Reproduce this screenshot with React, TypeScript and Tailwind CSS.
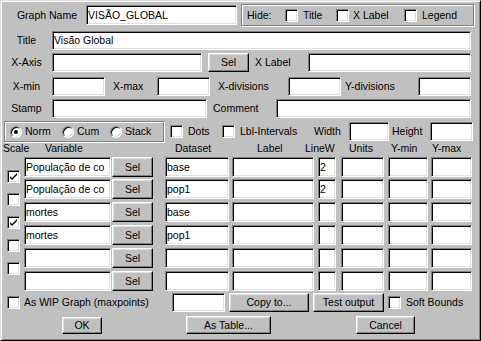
import React from 'react';

const sunken =
  'bg-white border border-t-[#808080] border-l-[#808080] border-b-white border-r-white shadow-[inset_1px_1px_0_#000,inset_-1px_-1px_0_#dfdfdf]';
const raised =
  'bg-[#c0c0c0] border border-t-white border-l-white border-b-black border-r-black shadow-[inset_-1px_-1px_0_#808080,inset_1px_1px_0_#dfdfdf]';
const etched = 'border border-[#808080] shadow-[inset_1px_1px_0_#fff,1px_1px_0_#fff]';

const Field = ({ className = '', value = '' }: { className?: string; value?: string }) => (
  <div className={`${sunken} ${className} shrink-0 flex items-center pl-[1px] overflow-hidden whitespace-nowrap`}>
    {value}
  </div>
);

const Btn = ({ className = '', label }: { className?: string; label: string }) => (
  <div className={`${raised} ${className} shrink-0 flex items-center justify-center`}>{label}</div>
);

const Check = ({ checked = false, className = '' }: { checked?: boolean; className?: string }) => (
  <div className={`${sunken} ${className} w-[13px] h-[13px] shrink-0 flex items-center justify-center`}>
    {checked && (
      <svg width="9" height="9" viewBox="0 0 9 9">
        <path d="M1 4v2l2 2 5-5V1L3 6z" fill="#000" />
      </svg>
    )}
  </div>
);

const Radio = ({ on = false }: { on?: boolean }) => (
  <div className="w-[12px] h-[12px] shrink-0 rounded-full bg-white border border-t-[#808080] border-l-[#808080] border-b-white border-r-white shadow-[inset_1px_1px_0_#000,inset_-1px_-1px_0_#dfdfdf] flex items-center justify-center">
    {on && <div className="w-[4px] h-[4px] rounded-full bg-black" />}
  </div>
);

const ROWS = [
  { v: 'População de co', d: 'base', w: '2', mt: 'mt-0' },
  { v: 'População de co', d: 'pop1', w: '2', mt: 'mt-[2px]' },
  { v: 'mortes', d: 'base', w: '', mt: 'mt-[3px]' },
  { v: 'mortes', d: 'pop1', w: '', mt: 'mt-[3px]' },
  { v: '', d: '', w: '', mt: 'mt-[3px]' },
  { v: '', d: '', w: '', mt: 'mt-[3px]' },
];

const SCALES = [true, false, true, false, false];

export default function App() {
  return (
    <div className="w-[481px] h-[341px] overflow-hidden bg-[#c0c0c0] text-black text-[10.5px] leading-none font-['Liberation_Sans',Arial,sans-serif] border border-t-[#dfdfdf] border-l-[#dfdfdf] border-b-black border-r-black shadow-[inset_1px_1px_0_#fff,inset_-1px_-1px_0_#808080]">
      {/* graph name + hide */}
      <div className="flex items-center h-[22px] mt-[3px]">
        <div className="w-[78px] text-right pr-[2px]">Graph Name</div>
        <Field className="ml-[7px] w-[151px] h-[20px]" value="VISÃO_GLOBAL" />
        <div className={`${etched} ml-[4px] w-[233px] h-[22px] flex items-center pl-[5px]`}>
          <span className="w-[38px]">Hide:</span>
          <Check />
          <span className="ml-[5px] w-[33px]">Title</span>
          <Check />
          <span className="ml-[4px] w-[51px]">X Label</span>
          <Check />
          <span className="ml-[5px]">Legend</span>
        </div>
      </div>

      <div className="flex items-center h-[19px] mt-[5px]">
        <div className="w-[51px] text-center">Title</div>
        <Field className="w-[419px] h-[19px]" value="Visão Global" />
      </div>

      <div className="flex items-center h-[19px] mt-[3px]">
        <div className="w-[51px] text-center">X-Axis</div>
        <Field className="w-[150px] h-[19px]" />
        <Btn className="ml-[6px] w-[41px] h-[19px]" label="Sel" />
        <div className="w-[59px] pl-[6px]">X Label</div>
        <Field className="w-[163px] h-[19px]" />
      </div>

      <div className="flex items-center h-[19px] mt-[5px]">
        <div className="w-[51px] text-center">X-min</div>
        <Field className="w-[53px] h-[19px]" />
        <div className="w-[52px] pl-[8px]">X-max</div>
        <Field className="w-[53px] h-[19px]" />
        <div className="w-[78px] pl-[8px]">X-divisions</div>
        <Field className="w-[53px] h-[19px]" />
        <div className="w-[77px] pl-[4px]">Y-divisions</div>
        <Field className="w-[53px] h-[19px]" />
      </div>

      <div className="flex items-center h-[19px] mt-[3px]">
        <div className="w-[51px] text-center">Stamp</div>
        <Field className="w-[155px] h-[19px]" />
        <div className="w-[69px] pl-[6px]">Comment</div>
        <Field className="w-[195px] h-[19px]" />
      </div>

      {/* mode / options */}
      <div className="flex items-center h-[21px] mt-[3px]">
        <div className={`${etched} ml-[3px] w-[160px] h-[21px] flex items-center pl-[5px]`}>
          <Radio on />
          <span className="ml-[3px] w-[37px]">Norm</span>
          <Radio />
          <span className="ml-[3px] w-[33px]">Cum</span>
          <Radio />
          <span className="ml-[3px]">Stack</span>
        </div>
        <Check className="ml-[6px]" />
        <span className="ml-[5px] w-[34px]">Dots</span>
        <Check />
        <span className="ml-[5px] w-[74px]">Lbl-Intervals</span>
        <span className="w-[35px]">Width</span>
        <Field className="w-[40px] h-[19px]" />
        <span className="ml-[3px] w-[38px]">Height</span>
        <Field className="w-[43px] h-[19px]" />
      </div>

      {/* column headers */}
      <div className="flex items-center h-[13px]">
        <span className="ml-[2px] w-[42px]">Scale</span>
        <span className="w-[130px]">Variable</span>
        <span className="w-[82px]">Dataset</span>
        <span className="w-[48px]">Label</span>
        <span className="w-[44px]">LineW</span>
        <span className="w-[42px]">Units</span>
        <span className="w-[41px]">Y-min</span>
        <span>Y-max</span>
      </div>

      {/* series */}
      <div className="flex mt-[2px]">
        <div className="w-[23px] pl-[6px] pt-[13px] flex flex-col gap-[10px]">
          {SCALES.map((s, i) => (
            <Check key={i} checked={s} />
          ))}
        </div>
        <div className="flex flex-col">
          {ROWS.map((r, i) => (
            <div key={i} className={`flex h-[20px] ${r.mt}`}>
              <Field className="w-[87px] h-[20px]" value={r.v} />
              <Btn className="ml-[1px] w-[41px] h-[20px]" label="Sel" />
              <Field className="ml-[12px] w-[64px] h-[20px]" value={r.d} />
              <Field className="ml-[3px] w-[82px] h-[20px]" />
              <Field className="ml-[4px] w-[18px] h-[20px]" value={r.w} />
              <Field className="ml-[5px] w-[43px] h-[20px]" />
              <Field className="ml-[4px] w-[40px] h-[20px]" />
              <Field className="ml-[3px] w-[41px] h-[20px]" />
            </div>
          ))}
        </div>
      </div>

      {/* wip / copy */}
      <div className="flex items-center h-[19px] mt-[2px]">
        <Check className="ml-[6px]" />
        <span className="ml-[4px] w-[148px]">As WIP Graph (maxpoints)</span>
        <Field className="w-[53px] h-[19px]" />
        <Btn className="ml-[4px] w-[80px] h-[19px]" label="Copy to..." />
        <Btn className="ml-[4px] w-[71px] h-[19px]" label="Test output" />
        <Check className="ml-[4px]" />
        <span className="ml-[5px]">Soft Bounds</span>
      </div>

      <div className="flex items-center h-[18px] mt-[4px]">
        <Btn className="ml-[61px] w-[40px] h-[17px]" label="OK" />
        <Btn className="ml-[84px] w-[85px] h-[18px]" label="As Table..." />
        <Btn className="ml-[85px] w-[59px] h-[18px]" label="Cancel" />
      </div>
    </div>
  );
}
